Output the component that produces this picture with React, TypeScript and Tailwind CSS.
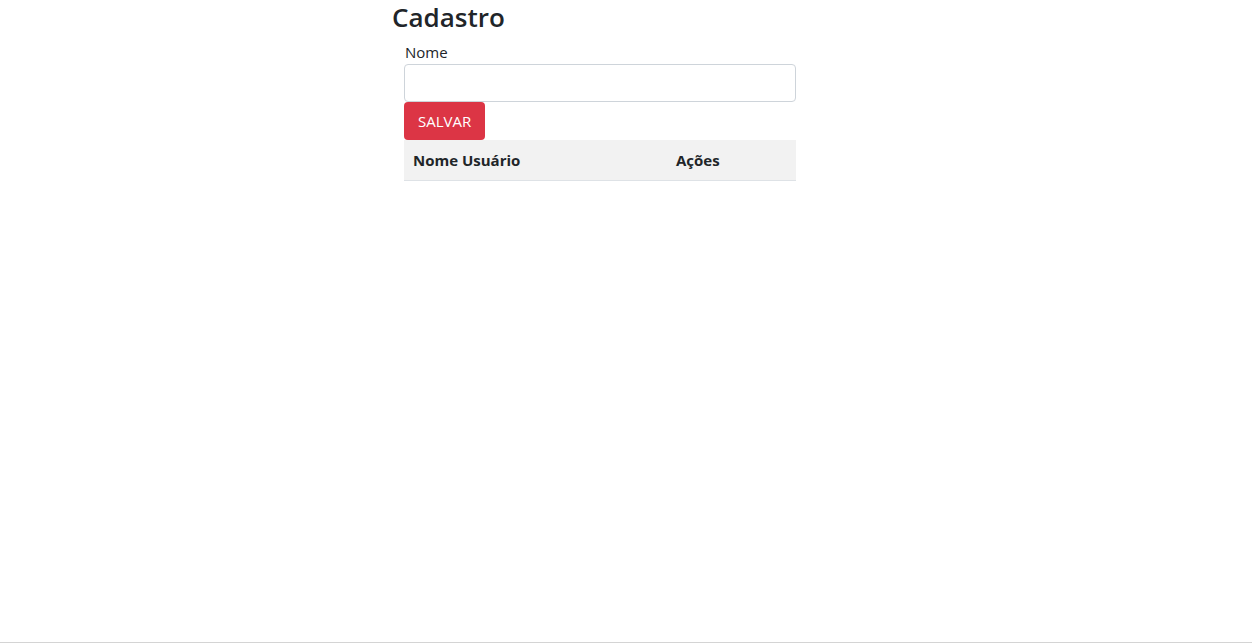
import React, { useState } from 'react';

type Usuario = { id: number; nome: string };

export default function App() {
  const [nome, setNome] = useState('');
  const [usuarios, setUsuarios] = useState<Usuario[]>([]);

  const salvar = () => {
    if (!nome.trim()) return;
    setUsuarios([...usuarios, { id: Date.now(), nome }]);
    setNome('');
  };

  return (
    <div
      className="h-screen bg-white border-b border-[#d4d4d4] text-[#212529]"
      style={{ fontFamily: '"Open Sans", "Noto Sans", sans-serif' }}
    >
      <div className="mx-auto w-[468px]">
        <h2 className="text-[26px] leading-[34px] font-semibold">Cadastro</h2>

        <div className="ml-3 w-[392px]">
          <label className="block text-[15px] leading-[30px] pt-[3px] -mb-[3px] pl-[1px]">Nome</label>
          <input
            value={nome}
            onChange={(e) => setNome(e.target.value)}
            className="block w-full h-[38px] rounded border border-[#ced4da] px-3 outline-none"
          />
          <button
            onClick={salvar}
            className="h-[38px] px-[14px] rounded bg-[#dc3545] text-white text-[15px]"
          >
            SALVAR
          </button>

          <table className="w-full border-collapse">
            <thead>
              <tr className="bg-[#f2f2f2] border-b border-[#dee2e6]">
                <th className="h-[40px] w-[263px] pl-[9px] text-left text-[15px] font-bold">Nome Usuário</th>
                <th className="h-[40px] pl-[9px] text-left text-[15px] font-bold">Ações</th>
              </tr>
            </thead>
            <tbody>
              {usuarios.map((u) => (
                <tr key={u.id} className="border-b border-[#dee2e6]">
                  <td className="p-2">{u.nome}</td>
                  <td className="p-2"></td>
                </tr>
              ))}
            </tbody>
          </table>
        </div>
      </div>
    </div>
  );
}
